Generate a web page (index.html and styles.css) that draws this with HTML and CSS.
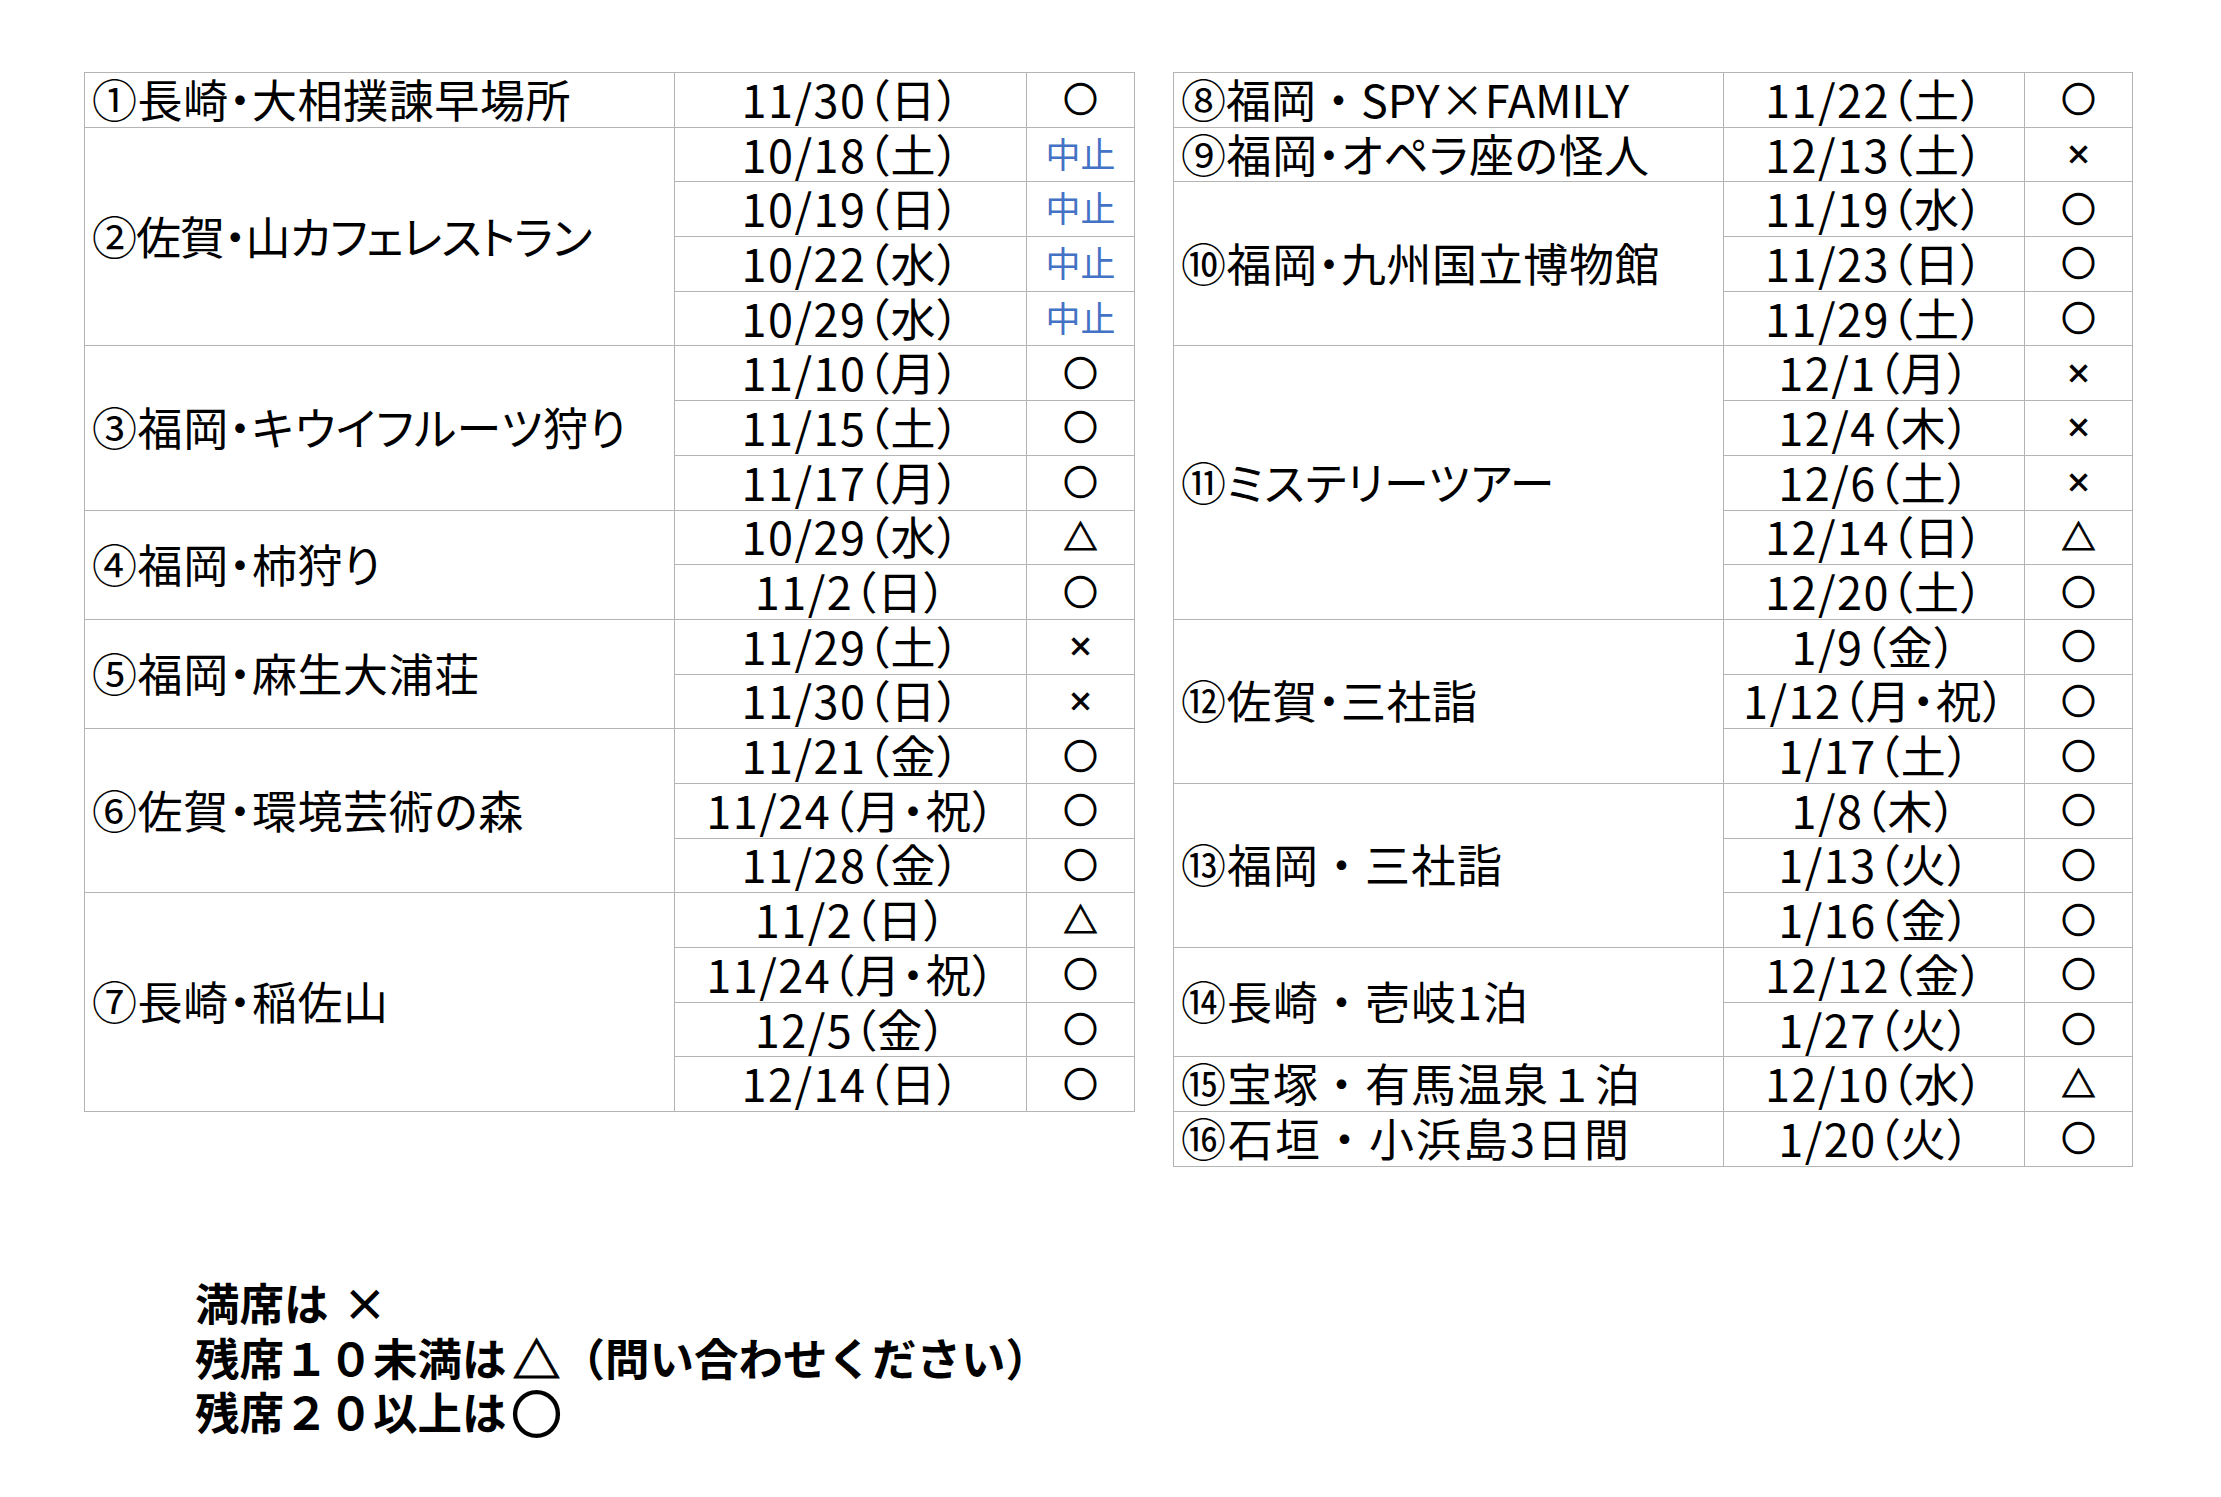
FILE: index.html
```html
<!DOCTYPE html>
<html lang="ja">
<head>
<meta charset="utf-8">
<title>ツアー空席状況</title>
<link rel="stylesheet" href="styles.css">
</head>
<body>
<div class="page">
  <div class="tables">
    <table class="sheet sheet-left">
      <colgroup><col class="c-name-l"><col class="c-date-l"><col class="c-st"></colgroup>
      <tr><td class="name">①長崎・大相撲諫早場所</td><td class="date">11/30（日）</td><td class="st">○</td></tr>
      <tr><td class="name tight" rowspan="4">②佐賀・山カフェレストラン</td><td class="date">10/18（土）</td><td class="st stop">中止</td></tr>
      <tr><td class="date">10/19（日）</td><td class="st stop">中止</td></tr>
      <tr><td class="date">10/22（水）</td><td class="st stop">中止</td></tr>
      <tr><td class="date">10/29（水）</td><td class="st stop">中止</td></tr>
      <tr><td class="name" rowspan="3">③福岡・キウイフルーツ狩り</td><td class="date">11/10（月）</td><td class="st">○</td></tr>
      <tr><td class="date">11/15（土）</td><td class="st">○</td></tr>
      <tr><td class="date">11/17（月）</td><td class="st">○</td></tr>
      <tr><td class="name" rowspan="2">④福岡・柿狩り</td><td class="date">10/29（水）</td><td class="st tri">△</td></tr>
      <tr><td class="date">11/2（日）</td><td class="st">○</td></tr>
      <tr><td class="name" rowspan="2">⑤福岡・麻生大浦荘</td><td class="date">11/29（土）</td><td class="st x">×</td></tr>
      <tr><td class="date">11/30（日）</td><td class="st x">×</td></tr>
      <tr><td class="name" rowspan="3">⑥佐賀・環境芸術の森</td><td class="date">11/21（金）</td><td class="st">○</td></tr>
      <tr><td class="date">11/24（月・祝）</td><td class="st">○</td></tr>
      <tr><td class="date">11/28（金）</td><td class="st">○</td></tr>
      <tr><td class="name" rowspan="4">⑦長崎・稲佐山</td><td class="date">11/2（日）</td><td class="st tri">△</td></tr>
      <tr><td class="date">11/24（月・祝）</td><td class="st">○</td></tr>
      <tr><td class="date">12/5（金）</td><td class="st">○</td></tr>
      <tr><td class="date">12/14（日）</td><td class="st">○</td></tr>
    </table>
    <table class="sheet sheet-right">
      <colgroup><col class="c-name-r"><col class="c-date-r"><col class="c-st"></colgroup>
      <tr><td class="name mono">⑧福岡・SPY×FAMILY</td><td class="date">11/22（土）</td><td class="st">○</td></tr>
      <tr><td class="name">⑨福岡・オペラ座の怪人</td><td class="date">12/13（土）</td><td class="st x">×</td></tr>
      <tr><td class="name" rowspan="3">⑩福岡・九州国立博物館</td><td class="date">11/19（水）</td><td class="st">○</td></tr>
      <tr><td class="date">11/23（日）</td><td class="st">○</td></tr>
      <tr><td class="date">11/29（土）</td><td class="st">○</td></tr>
      <tr><td class="name" rowspan="5">⑪ミステリーツアー</td><td class="date">12/1（月）</td><td class="st x">×</td></tr>
      <tr><td class="date">12/4（木）</td><td class="st x">×</td></tr>
      <tr><td class="date">12/6（土）</td><td class="st x">×</td></tr>
      <tr><td class="date">12/14（日）</td><td class="st tri">△</td></tr>
      <tr><td class="date">12/20（土）</td><td class="st">○</td></tr>
      <tr><td class="name" rowspan="3">⑫佐賀・三社詣</td><td class="date">1/9（金）</td><td class="st">○</td></tr>
      <tr><td class="date">1/12（月・祝）</td><td class="st">○</td></tr>
      <tr><td class="date">1/17（土）</td><td class="st">○</td></tr>
      <tr><td class="name mono spaced" rowspan="3">⑬福岡・三社詣</td><td class="date">1/8（木）</td><td class="st">○</td></tr>
      <tr><td class="date">1/13（火）</td><td class="st">○</td></tr>
      <tr><td class="date">1/16（金）</td><td class="st">○</td></tr>
      <tr><td class="name mono spaced" rowspan="2">⑭長崎・壱岐1泊</td><td class="date">12/12（金）</td><td class="st">○</td></tr>
      <tr><td class="date">1/27（火）</td><td class="st">○</td></tr>
      <tr><td class="name mono spaced">⑮宝塚・有馬温泉１泊</td><td class="date">12/10（水）</td><td class="st tri">△</td></tr>
      <tr><td class="name mono wide">⑯石垣・小浜島3日間</td><td class="date">1/20（火）</td><td class="st">○</td></tr>
    </table>
  </div>
  <div class="legend">
    <p class="legend-line">満席は<span class="mark mark-x">×</span></p>
    <p class="legend-line">残席１０未満は<span class="mark mark-tri">△</span>（問い合わせください）</p>
    <p class="legend-line">残席２０以上は<span class="mark mark-o">○</span></p>
  </div>
</div>
</body>
</html>
```
FILE: styles.css
```css
html, body {
  margin: 0;
  padding: 0;
  background: #ffffff;
}
body {
  font-family: "Noto Sans CJK JP", "Noto Sans", sans-serif;
  color: #000000;
}
.page {
  padding: 72px 0 0 84px;
}
.tables {
  display: flex;
  align-items: flex-start;
  gap: 38px;
}
.sheet {
  border-collapse: collapse;
  table-layout: fixed;
}
.sheet-left { width: 1051px; }
.sheet-right { width: 958px; }
.c-name-l { width: 590px; }
.c-date-l { width: 352px; }
.c-name-r { width: 550px; }
.c-date-r { width: 301px; }
.c-st { width: 108px; }
.sheet tr {
  height: 54.7px;
}
.sheet td {
  border: 1px solid #b4b4b4;
  padding: 0 0 3px 0;
  font-size: 45px;
  line-height: 1;
  white-space: nowrap;
  vertical-align: middle;
}
.name {
  text-align: left;
  padding-left: 7px !important;
  font-feature-settings: "palt" 1;
  letter-spacing: 0.6px;
}
.name.tight {
  letter-spacing: -1px;
}
.name.mono {
  font-feature-settings: normal;
  letter-spacing: 0;
}
.name.mono.spaced {
  letter-spacing: 1px;
}
.name.mono.wide {
  letter-spacing: 2px;
}
.date {
  text-align: center;
  font-feature-settings: "palt" 1;
  letter-spacing: 1.5px;
  text-indent: 1.5px;
}
.st {
  text-align: center;
  font-size: 34px !important;
  font-weight: 700;
  -webkit-text-stroke: 1.3px #000000;
}
.st.x {
  font-size: 26px !important;
  -webkit-text-stroke: 0.8px #000000;
}
.st.tri {
  font-size: 34px !important;
  -webkit-text-stroke: 1px #000000;
}
.st.stop {
  color: #4472c4;
  font-size: 35px !important;
  font-weight: 400;
  padding-bottom: 5px;
  -webkit-text-stroke: 0;
}
.legend {
  margin: 108px 0 0 111px;
}
.legend-line {
  margin: 0;
  height: 54.7px;
  display: flex;
  align-items: center;
  font-size: 44.5px;
  font-weight: 700;
  line-height: 1;
  white-space: nowrap;
}
.mark-x {
  margin-left: 14px;
}
.mark-tri {
  font-size: 48px;
  margin: 0 0 0 6px;
  -webkit-text-stroke: 1px #000000;
}
.mark-o {
  font-size: 50px;
  margin-left: 5px;
  -webkit-text-stroke: 2.2px #000000;
}
```
